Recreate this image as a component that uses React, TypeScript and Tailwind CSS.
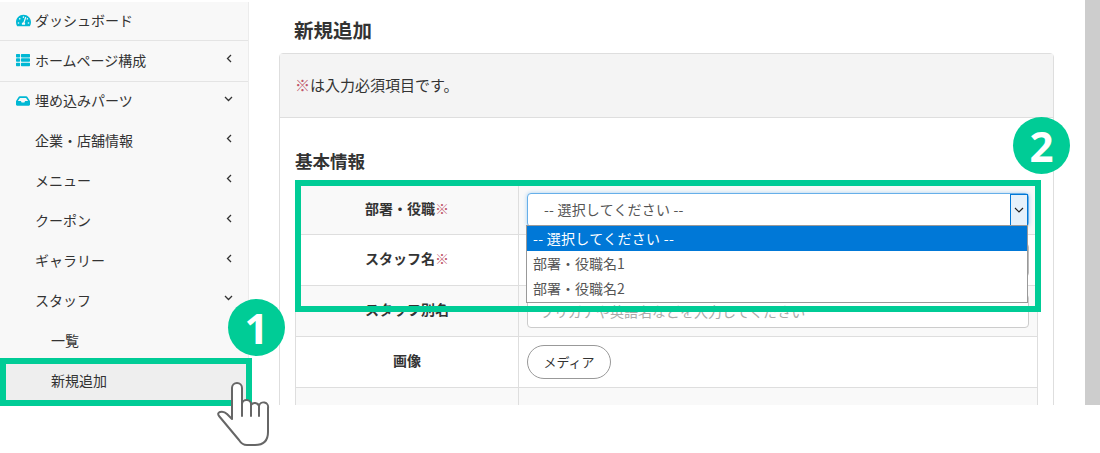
import React from 'react';
import { FaTachometerAlt, FaThList, FaInbox } from 'react-icons/fa';

const font = { fontFamily: '"Noto Sans CJK JP", "Noto Sans", sans-serif' };

const Req = () => <span className="text-[#c0566a] font-normal">※</span>;

const ArrowLeft = () => (
    <svg className="ml-auto mb-1 mr-[16px]" width="6" height="9" viewBox="0 0 6 9" fill="none" stroke="#333" strokeWidth="1.3"><path d="M5 1L1.5 4.5 5 8" /></svg>
);
const ArrowDown = () => (
    <svg className="ml-auto mb-1 mr-[15px]" width="9" height="6" viewBox="0 0 9 6" fill="none" stroke="#333" strokeWidth="1.3"><path d="M1 1l3.5 3.5L8 1" /></svg>
);

const NavItem: React.FC<{
    label: string;
    icon?: React.ReactNode;
    arrow?: 'left' | 'down';
    border?: boolean;
    className?: string;
}> = ({ label, icon, arrow, border, className = 'h-10 pl-[35px]' }) => (
    <div className={`shrink-0 flex items-center relative pb-0.5 ${className} ${border ? 'border-b border-[#e4e4e4]' : ''}`}>
        {icon && <span className="absolute left-4 text-[#00b8d4] text-[14px]">{icon}</span>}
        <span>{label}</span>
        {arrow === 'left' && <ArrowLeft />}
        {arrow === 'down' && <ArrowDown />}
    </div>
);

const Row: React.FC<{ label: React.ReactNode; h: string; striped?: boolean; children?: React.ReactNode }> = ({ label, h, striped, children }) => (
    <div className={`flex border-b border-[#dedede] ${h} ${striped ? 'bg-[#f9f9f9]' : 'bg-white'}`}>
        <div className="w-[223px] shrink-0 border-r border-[#dedede] flex items-center justify-center font-bold text-[14px] pb-1">{label}</div>
        <div className="flex-1 flex items-center pl-2 pr-2">{children}</div>
    </div>
);

export default function App() {
    return (
        <div className="relative w-[1100px] h-[453px] bg-white overflow-hidden text-[#333] text-[14px]" style={font}>
            <div className="flex h-[405px]">
                {/* sidebar */}
                <div className="w-[249px] shrink-0 mt-0.5 bg-[#f8f8f8] border-r border-[#ececec] flex flex-col">
                    <NavItem label="ダッシュボード" icon={<FaTachometerAlt className="text-[15px]" />} border className="h-[39px] pl-[35px]" />
                    <NavItem label="ホームページ構成" icon={<FaThList />} arrow="left" border className="h-[41px] pl-[35px]" />
                    <NavItem label="埋め込みパーツ" icon={<FaInbox />} arrow="down" className="h-[39px] pl-[35px]" />
                    <NavItem label="企業・店舗情報" arrow="left" />
                    <NavItem label="メニュー" arrow="left" />
                    <NavItem label="クーポン" arrow="left" />
                    <NavItem label="ギャラリー" arrow="left" />
                    <NavItem label="スタッフ" arrow="down" />
                    <NavItem label="一覧" className="h-10 pl-[51px]" />
                    <NavItem label="新規追加" className="h-10 pl-[51px] bg-[#eeeeee]" />
                </div>

                {/* main */}
                <div className="w-[836px] shrink-0 pl-[30px] pr-[31px] overflow-hidden">
                    <h1 className="text-[19.5px] font-bold pl-[15px] h-[53px] pt-4 leading-7">新規追加</h1>
                    <div className="border border-[#dedede] rounded-t h-[400px]">
                        <div className="h-[64px] bg-[#f4f4f4] border-b border-[#dedede] flex items-center pl-[15px] text-[15px]">
                            <Req />は入力必須項目です。
                        </div>
                        <div className="pl-[15px] pr-[15px] pt-[31px]">
                            <h2 className="text-[17.5px] font-bold h-[37px] leading-6">基本情報</h2>
                            <div className="border-l border-r border-[#dedede]">
                                <Row h="h-[49px]" striped label={<span>部署・役職<Req /></span>}>
                                    <div className="w-[502px] h-[34px] -mt-px border border-[#66afe9] rounded shadow-[0_0_4px_#a8d2f2] bg-white flex items-center pl-4 text-[#555] tracking-[0.2px] relative">
                                        -- 選択してください --
                                        <div className="absolute right-0 top-0 w-[18px] h-[32px] bg-[#e5f1fb] border border-[#0078d7] flex items-center justify-center">
                                            <svg width="10" height="6" viewBox="0 0 10 6" fill="none" stroke="#222" strokeWidth="1.2"><path d="M1 1l4 4 4-4" /></svg>
                                        </div>
                                    </div>
                                </Row>
                                <Row h="h-[51px]" label={<span>スタッフ名<Req /></span>}>
                                    <div className="w-[502px] h-[34px] border border-[#bbb] rounded bg-white" />
                                </Row>
                                <Row h="h-[51px]" striped label="スタッフ別名">
                                    <div className="w-[502px] h-[34px] border border-[#ccc] rounded bg-white flex items-center pl-3 text-[#aaa]">
                                        フリガナや英語名などを入力してください
                                    </div>
                                </Row>
                                <Row h="h-[51px]" label="画像">
                                    <button className="w-[84px] h-[34px] border border-[#999] rounded-full bg-white text-[13px] text-[#333]">メディア</button>
                                </Row>
                                <Row h="h-[51px]" striped label="" />
                            </div>
                        </div>
                    </div>
                </div>

                <div className="w-[15px] shrink-0 bg-[#cdcdcd]" />
            </div>

            {/* select dropdown */}
            <div className="absolute left-[526px] top-[225px] w-[502px] h-[78px] border border-[#999] bg-white text-[#555] flex flex-col">
                <div className="h-[25px] bg-[#0078d7] text-white pl-[6px] flex items-center tracking-[0.3px]">-- 選択してください --</div>
                <div className="h-[25px] pl-[6px] flex items-center">部署・役職名1</div>
                <div className="h-[25px] pl-[6px] flex items-center">部署・役職名2</div>
            </div>

            {/* callouts */}
            <div className="absolute left-0 top-[358px] w-[252px] h-[48px] border-[6px] border-[#00cc96]" />
            <div className="absolute left-[295px] top-[180px] w-[746px] h-[132px] border-[6px] border-[#00cc96]" />
            <div className="absolute left-[228px] top-[299px] w-[57px] h-[57px] rounded-full bg-[#00cc96] text-white font-bold text-[42px] leading-none flex items-center justify-center" style={{ fontFamily: '"Open Sans", sans-serif' }}>1</div>
            <div className="absolute left-[1013px] top-[117px] w-[57px] h-[57px] rounded-full bg-[#00cc96] text-white font-bold text-[42px] leading-none flex items-center justify-center" style={{ fontFamily: '"Open Sans", sans-serif' }}>2</div>

            {/* hand cursor */}
            <svg className="absolute left-[215px] top-[380px]" width="58" height="70" viewBox="215 380 58 70" fill="none">
                <path
                    d="M232 419V388a5 5 0 0 1 10 0V404a4.5 4.5 0 0 1 9 1a4.5 4.5 0 0 1 8 1a4.5 4.5 0 0 1 9 2V432q0 13-13 13H247q-5 0-8-5L219 416q-2-3 1-4q4-1 7 2z"
                    fill="#fff"
                    stroke="#666"
                    strokeWidth="2"
                    strokeLinejoin="round"
                />
                <path d="M242 404v12M251 405v11M259 406v10" stroke="#666" strokeWidth="2" strokeLinecap="round" />
            </svg>
        </div>
    );
}
